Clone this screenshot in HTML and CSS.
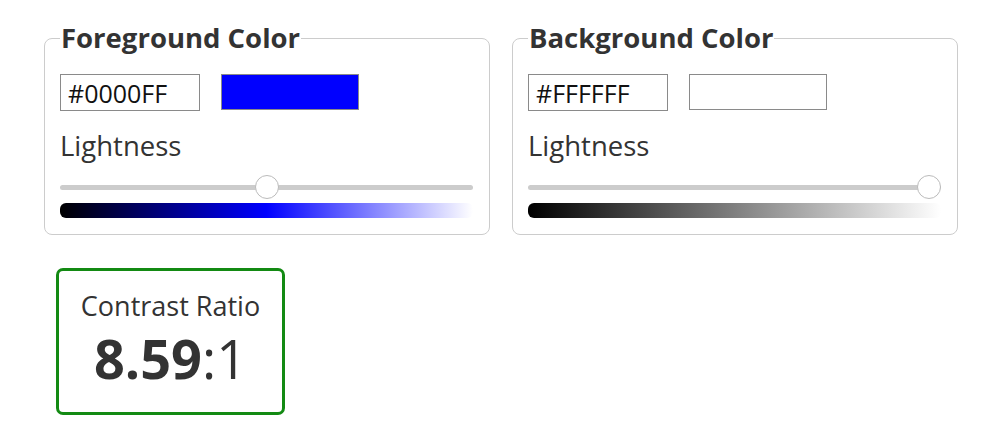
FILE: index.html
```html
<!DOCTYPE html>
<html lang="en">

<head>
	<meta charset="UTF-8">
	<meta name="viewport" content="width=device-width, initial-scale=1.0">
	<title>Contrast Checker</title>
	<link rel="stylesheet" href="styles.css">
</head>

<body>
	<div class="main">
		<div class="pickers">
			<!-- 前景色 -->
			<fieldset class="picker">
				<legend>Foreground Color</legend>
				<div class="row">
					<input class="hex" type="text" value="#0000FF">
					<span class="swatch fg"></span>
				</div>
				<label class="label">Lightness</label>
				<input class="slider" type="range" min="0" max="100" value="50">
				<div class="ramp fg-ramp"></div>
			</fieldset>

			<!-- 背景色 -->
			<fieldset class="picker">
				<legend>Background Color</legend>
				<div class="row">
					<input class="hex" type="text" value="#FFFFFF">
					<span class="swatch bg"></span>
				</div>
				<label class="label">Lightness</label>
				<input class="slider" type="range" min="0" max="100" value="100">
				<div class="ramp bg-ramp"></div>
			</fieldset>
		</div>

		<div class="result">
			<div class="result-title">Contrast Ratio</div>
			<div class="ratio"><b>8.59</b>:1</div>
		</div>
	</div>
</body>

</html>
```

FILE: styles.css
```css
* {
	margin: 0;
	padding: 0;
	box-sizing: border-box;
}

body {
	background: #fff;
	color: #333;
	font-family: "Open Sans", "Liberation Sans", sans-serif;
}

.main {
	padding: 19px 0 0 44px;
}

.pickers {
	display: flex;
	gap: 22px;
}

.picker {
	width: 446px;
	min-width: 0;
	border: 1px solid #ccc;
	border-radius: 8px;
	padding: 17px 16px 16px 15px;
}

.picker legend {
	font-size: 27.5px;
	font-weight: 700;
	padding: 0 1px;
	line-height: 38px;
}

.row {
	display: flex;
	gap: 21px;
}

.hex {
	width: 140px;
	height: 37px;
	border: 1px solid #8a8a8a;
	padding: 0 7px;
	font-family: "Open Sans", "Liberation Sans", sans-serif;
	font-size: 25px;
	color: #111;
	background: #fff;
	outline: none;
}

.swatch {
	display: block;
	width: 138px;
	height: 36px;
	border: 1px solid #8a8a8a;
}

.swatch.fg {
	background: #0000ff;
}

.swatch.bg {
	background: #fff;
}

.label {
	display: block;
	margin-top: 16px;
	font-size: 27.5px;
	line-height: 37px;
}

.slider {
	-webkit-appearance: none;
	appearance: none;
	display: block;
	width: 100%;
	height: 24px;
	margin-top: 11px;
	background: transparent;
}

.slider::-webkit-slider-runnable-track {
	height: 5px;
	border-radius: 3px;
	background: #ccc;
}

.slider::-webkit-slider-thumb {
	-webkit-appearance: none;
	width: 24px;
	height: 24px;
	margin-top: -9.5px;
	border-radius: 50%;
	border: 1px solid #bbb;
	background: #fff;
}

.ramp {
	height: 15px;
	margin-top: 4px;
	border-radius: 6px;
}

.fg-ramp {
	background: linear-gradient(to right, #000, #00f, #fff);
}

.bg-ramp {
	background: linear-gradient(to right, #000, #fff);
}

/* 对比度结果 */
.result {
	width: 229px;
	margin: 33px 0 0 12px;
	border: 3px solid #138a13;
	border-radius: 7px;
	padding: 17px 0 17px;
	text-align: center;
}

.result-title {
	font-size: 27px;
	line-height: 35px;
}

.ratio {
	font-size: 54px;
	line-height: 74px;
	margin-top: -2px;
}

.ratio b {
	font-weight: 700;
}
```
